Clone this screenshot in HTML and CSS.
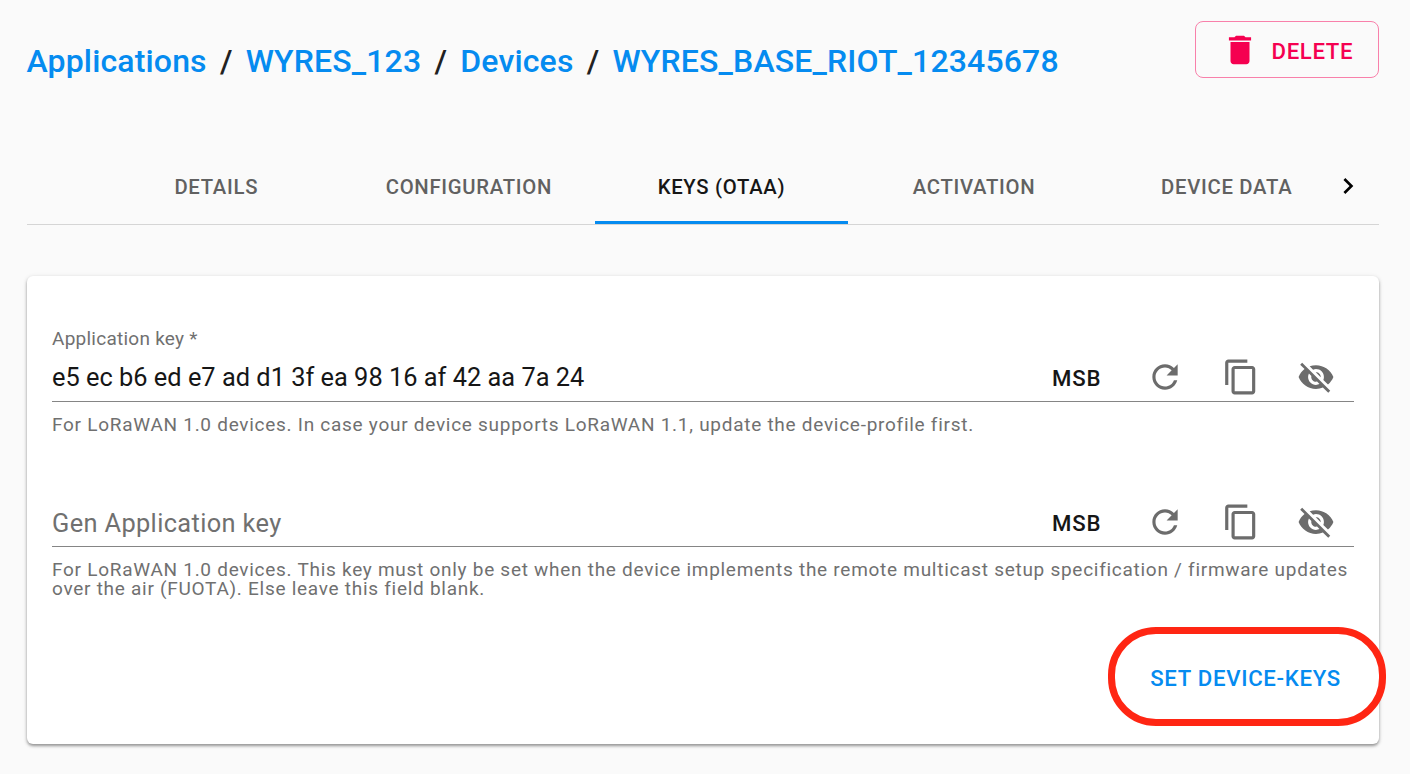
FILE: index.html
```html
<!DOCTYPE html>
<html lang="en">
<head>
<meta charset="utf-8">
<title>Device keys</title>
<link rel="stylesheet" href="styles.css">
</head>
<body>
<svg class="defs" aria-hidden="true">
  <symbol id="refresh" viewBox="0 0 24 24"><path d="M17.65 6.35C16.2 4.9 14.21 4 12 4c-4.42 0-7.99 3.58-7.99 8s3.57 8 7.99 8c3.73 0 6.84-2.55 7.73-6h-2.08c-.82 2.33-3.04 4-5.65 4-3.31 0-6-2.69-6-6s2.69-6 6-6c1.66 0 3.14.69 4.22 1.78L13 11h7V4l-2.35 2.35z"/></symbol>
  <symbol id="copy" viewBox="0 0 24 24"><path d="M16 1H4c-1.1 0-2 .9-2 2v14h2V3h12V1zm3 4H8c-1.1 0-2 .9-2 2v14c0 1.1.9 2 2 2h11c1.1 0 2-.9 2-2V7c0-1.1-.9-2-2-2zm0 16H8V7h11v14z"/></symbol>
  <symbol id="hidden" viewBox="0 0 24 24"><path d="M12 7c2.76 0 5 2.24 5 5 0 .65-.13 1.26-.36 1.83l2.92 2.92c1.51-1.26 2.7-2.89 3.43-4.75-1.73-4.39-6-7.5-11-7.5-1.4 0-2.74.25-3.98.7l2.16 2.16C10.74 7.13 11.35 7 12 7zM2 4.27l2.28 2.28.46.46C3.08 8.3 1.78 10.02 1 12c1.73 4.39 6 7.5 11 7.5 1.55 0 3.03-.3 4.38-.84l.42.42L19.73 22 21 20.73 3.27 3 2 4.27zM7.53 9.8l1.55 1.55c-.05.21-.08.43-.08.65 0 1.66 1.34 3 3 3 .22 0 .44-.03.65-.08l1.55 1.55c-.67.33-1.41.53-2.2.53-2.76 0-5-2.24-5-5 0-.79.2-1.53.53-2.2zm4.31-.78l3.15 3.15.02-.16c0-1.66-1.34-3-3-3l-.17.01z"/></symbol>
</svg>
<header class="header">
  <nav class="crumbs"><a>Applications</a><i>/</i><a>WYRES_123</a><i>/</i><a>Devices</a><i>/</i><a>WYRES_BASE_RIOT_12345678</a></nav>
  <button class="delete"><svg viewBox="0 0 24 24"><path d="M6 19c0 1.1.9 2 2 2h8c1.1 0 2-.9 2-2V7H6v12zM19 4h-3.5l-1-1h-5l-1 1H5v2h14V4z"/></svg><span>DELETE</span></button>
</header>
<div class="tabs">
  <div class="tab">DETAILS</div>
  <div class="tab">CONFIGURATION</div>
  <div class="tab active">KEYS (OTAA)</div>
  <div class="tab">ACTIVATION</div>
  <div class="tab">DEVICE DATA</div>
  <svg class="next" viewBox="0 0 24 24"><path d="M10 6L8.59 7.41 13.17 12l-4.58 4.59L10 18l6-6z"/></svg>
</div>
<main class="card">
  <label class="label"><span>Application key *</span></label>
  <div class="field">
    <span class="value">e5 ec b6 ed e7 ad d1 3f ea 98 16 af 42 aa 7a 24</span>
    <span class="msb">MSB</span>
    <svg class="icon"><use href="#refresh"/></svg><svg class="icon"><use href="#copy"/></svg><svg class="icon"><use href="#hidden"/></svg>
  </div>
  <p class="help">For LoRaWAN 1.0 devices. In case your device supports LoRaWAN 1.1, update the device-profile first.</p>
  <div class="field second">
    <span class="placeholder">Gen Application key</span>
    <span class="msb">MSB</span>
    <svg class="icon"><use href="#refresh"/></svg><svg class="icon"><use href="#copy"/></svg><svg class="icon"><use href="#hidden"/></svg>
  </div>
  <p class="help">For LoRaWAN 1.0 devices. This key must only be set when the device implements the remote multicast setup specification / firmware updates<br>over the air (FUOTA). Else leave this field blank.</p>
  <div class="actions"><button class="submit">SET DEVICE-KEYS</button></div>
</main>
<div class="highlight"></div>
</body>
</html>
```
FILE: styles.css
```css
* { box-sizing: border-box; }
body { margin: 0; height: 774px; overflow: hidden; position: relative; padding: 21px 31px 0 27px; background: #fafafa; font-family: Roboto, sans-serif; color: #212121; }
.defs { position: absolute; width: 0; height: 0; }
button { font-family: inherit; background: none; border: 0; padding: 0; }
.header { display: flex; justify-content: space-between; height: 128px; }
.crumbs { display: flex; margin-left: -.5px; padding-top: 20px; font-size: 32px; line-height: 40px; letter-spacing: .15px; color: #058bf0; font-weight: 500; }
.crumbs i { width: 39px; text-align: center; font-style: normal; color: #212121; }
.delete { display: flex; align-items: center; width: 184px; height: 57px; padding-left: 25px; border: 1px solid #f880aa; border-radius: 8px; color: #f50050; font-size: 22.2px; font-weight: 500; letter-spacing: .65px; }
.delete span { padding-top: 3px; }
.delete svg { width: 38px; height: 38px; margin-right: 12.5px; fill: #f50050; }
.tabs { display: flex; height: 76px; border-bottom: 1px solid #d5d5d5; padding-left: 63px; }
.tab { width: 252.6px; flex: none; padding-top: 26px; text-align: center; font-size: 20.3px; line-height: 24px; font-weight: 500; letter-spacing: .72px; color: #616161; }
.tab.active { color: #161616; border-bottom: 3px solid #058bf0; }
.next { width: 32px; height: 32px; margin: 20.5px 0 0 -21px; }
.card { height: 468px; margin-top: 51px; padding: 52px 25px 0; background: #fff; border-radius: 6px; box-shadow: 0 2px 3px rgba(0,0,0,.35), 0 1px 5px rgba(0,0,0,.12); }
.label { display: block; height: 25px; font-size: 19px; line-height: 22px; color: #707070; letter-spacing: .25px; }
.field { display: flex; align-items: center; height: 49px; border-bottom: 1px solid #858585; color: #161616; font-size: 25.38px; }
.field span:first-child { flex: 1; }
.msb { width: 94px; padding-top: 2px; font-size: 22.2px; font-weight: 500; letter-spacing: .8px; }
.icon { width: 38px; height: 38px; margin-right: 37.5px; fill: #6c6c6c; }
.icon:last-child { margin-right: 19px; }
.help { margin: 0; padding-top: 14px; font-size: 19px; line-height: 19px; letter-spacing: .725px; color: #707070; white-space: nowrap; margin-top: -1px; }
.second { margin-top: 64px; }
.field .placeholder { padding-top: 2px; color: #707070; letter-spacing: .36px; }
.actions { display: flex; justify-content: flex-end; padding: 67px 13px 0; }
.submit { color: #058bf0; font-size: 22.2px; line-height: 26px; font-weight: 500; letter-spacing: .7px; }
.highlight { position: absolute; left: 1108px; top: 626.5px; width: 278px; height: 99px; border: 7px solid #ff2613; border-radius: 48px; pointer-events: none; }
```
